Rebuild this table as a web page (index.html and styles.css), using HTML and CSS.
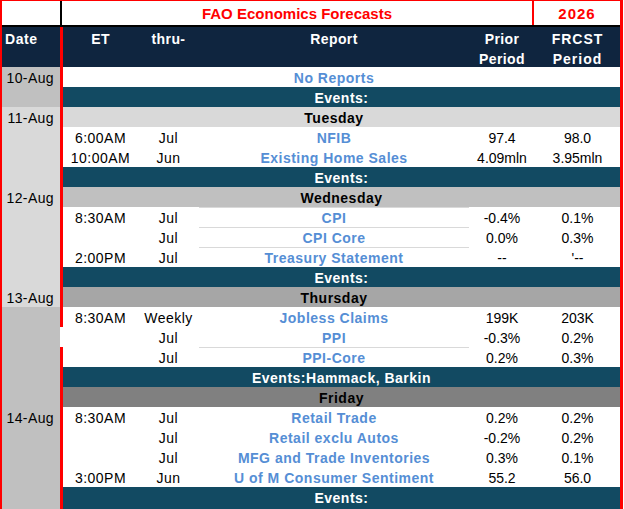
FILE: index.html
```html
<!DOCTYPE html>
<html>
<head>
<meta charset="utf-8">
<title>FAO Economics Forecasts</title>
<link rel="stylesheet" href="styles.css">
</head>
<body>
<div class="sheet">
  <div class="title-row">
    <div class="t-blank"></div>
    <div class="t-main">FAO Economics Forecasts</div>
    <div class="t-year">2026</div>
  </div>

  <div class="head">
    <div class="hd">Date</div>
    <div class="sep"></div>
    <div class="grid">
      <div class="hc">ET</div>
      <div class="hc">thru-</div>
      <div class="hc">Report</div>
      <div class="hc">Prior<br>Period</div>
      <div class="hc wide">FRCST<br>Period</div>
    </div>
  </div>

  <div class="row">
    <div class="d silver">10-Aug</div><div class="sep"></div>
    <div class="grid white"><div class="c rep mid">No Reports</div></div>
  </div>
  <div class="row">
    <div class="d silver"></div><div class="sep"></div>
    <div class="grid events"><div class="c span">Events:</div></div>
  </div>

  <div class="row">
    <div class="d light">11-Aug</div><div class="sep"></div>
    <div class="grid day-light"><div class="c day mid">Tuesday</div></div>
  </div>
  <div class="row">
    <div class="d light"></div><div class="sep"></div>
    <div class="grid white">
      <div class="c">6:00AM</div><div class="c">Jul</div><div class="c rep">NFIB</div><div class="c num">97.4</div><div class="c num">98.0</div>
    </div>
  </div>
  <div class="row">
    <div class="d light"></div><div class="sep"></div>
    <div class="grid white">
      <div class="c">10:00AM</div><div class="c">Jun</div><div class="c rep">Existing Home Sales</div><div class="c num">4.09mln</div><div class="c num">3.95mln</div>
    </div>
  </div>
  <div class="row">
    <div class="d light"></div><div class="sep"></div>
    <div class="grid events"><div class="c span">Events:</div></div>
  </div>

  <div class="row">
    <div class="d light">12-Aug</div><div class="sep"></div>
    <div class="grid day-silver"><div class="c day span">Wednesday</div></div>
  </div>
  <div class="row">
    <div class="d light"></div><div class="sep"></div>
    <div class="grid white">
      <div class="c">8:30AM</div><div class="c">Jul</div><div class="c rep rule">CPI</div><div class="c num">-0.4%</div><div class="c num">0.1%</div>
    </div>
  </div>
  <div class="row">
    <div class="d light"></div><div class="sep"></div>
    <div class="grid white">
      <div class="c"></div><div class="c">Jul</div><div class="c rep rule">CPI Core</div><div class="c num">0.0%</div><div class="c num">0.3%</div>
    </div>
  </div>
  <div class="row">
    <div class="d light"></div><div class="sep"></div>
    <div class="grid white">
      <div class="c">2:00PM</div><div class="c">Jul</div><div class="c rep rule">Treasury Statement</div><div class="c num">--</div><div class="c num">'--</div>
    </div>
  </div>
  <div class="row">
    <div class="d light"></div><div class="sep"></div>
    <div class="grid events"><div class="c span">Events:</div></div>
  </div>

  <div class="row">
    <div class="d light">13-Aug</div><div class="sep"></div>
    <div class="grid day-dark"><div class="c day mid">Thursday</div></div>
  </div>
  <div class="row">
    <div class="d silver"></div><div class="sep"></div>
    <div class="grid white">
      <div class="c">8:30AM</div><div class="c">Weekly</div><div class="c rep">Jobless Claims</div><div class="c num">199K</div><div class="c num">203K</div>
    </div>
  </div>
  <div class="row">
    <div class="d silver"></div><div class="sep gap"></div>
    <div class="grid white">
      <div class="c"></div><div class="c">Jul</div><div class="c rep">PPI</div><div class="c num">-0.3%</div><div class="c num">0.2%</div>
    </div>
  </div>
  <div class="row">
    <div class="d silver"></div><div class="sep"></div>
    <div class="grid white">
      <div class="c"></div><div class="c">Jul</div><div class="c rep rule">PPI-Core</div><div class="c num">0.2%</div><div class="c num">0.3%</div>
    </div>
  </div>
  <div class="row">
    <div class="d silver"></div><div class="sep"></div>
    <div class="grid events"><div class="c span">Events:Hammack, Barkin</div></div>
  </div>

  <div class="row">
    <div class="d silver"></div><div class="sep"></div>
    <div class="grid day-grey"><div class="c day span">Friday</div></div>
  </div>
  <div class="row">
    <div class="d silver">14-Aug</div><div class="sep"></div>
    <div class="grid white">
      <div class="c">8:30AM</div><div class="c">Jul</div><div class="c rep">Retail Trade</div><div class="c num">0.2%</div><div class="c num">0.2%</div>
    </div>
  </div>
  <div class="row">
    <div class="d silver"></div><div class="sep"></div>
    <div class="grid white">
      <div class="c"></div><div class="c">Jul</div><div class="c rep">Retail exclu Autos</div><div class="c num">-0.2%</div><div class="c num">0.2%</div>
    </div>
  </div>
  <div class="row">
    <div class="d silver"></div><div class="sep"></div>
    <div class="grid white">
      <div class="c"></div><div class="c">Jul</div><div class="c rep">MFG and Trade Inventories</div><div class="c num">0.3%</div><div class="c num">0.1%</div>
    </div>
  </div>
  <div class="row">
    <div class="d silver"></div><div class="sep"></div>
    <div class="grid white">
      <div class="c">3:00PM</div><div class="c">Jun</div><div class="c rep">U of M Consumer Sentiment</div><div class="c num">55.2</div><div class="c num">56.0</div>
    </div>
  </div>
  <div class="row last">
    <div class="d silver"></div><div class="sep"></div>
    <div class="grid events"><div class="c span">Events:</div></div>
  </div>
</div>
</body>
</html>
```

FILE: styles.css
```css
html, body {
  margin: 0;
  padding: 0;
  background: #ffffff;
}

body {
  font-family: "Liberation Sans", Arial, sans-serif;
  font-size: 14px;
  color: #000000;
}

.sheet {
  width: 623px;
  box-sizing: border-box;
  border-left: 2px solid #ff0000;
  border-right: 3px solid #ff0000;
  border-top: 1px solid #ff0000;
}

/* title row */
.title-row {
  display: flex;
  height: 26px;
  box-sizing: border-box;
  border-bottom: 2px solid #000000;
  background: #ffffff;
}

.t-blank {
  flex: none;
  width: 58px;
  border-right: 2px solid #000000;
}

.t-main,
.t-year {
  flex: none;
  box-sizing: border-box;
  height: 24px;
  padding-top: 2px;
  line-height: 22px;
  text-align: center;
  color: #ff0000;
  font-weight: bold;
  font-size: 15px;
}

.t-main {
  width: 470px;
  border-right: 2px solid #ff0000;
  width: 472px;
}

.t-year {
  width: 86px;
  letter-spacing: 1px;
}

/* header */
.head {
  display: flex;
  height: 40px;
  background: #0f253f;
  color: #ffffff;
  font-weight: bold;
}

.hd {
  flex: none;
  width: 58px;
  box-sizing: border-box;
  padding: 1.5px 0 0 3px;
  line-height: 20px;
  letter-spacing: 0.6px;
}

.hc {
  text-align: center;
  padding-top: 1.5px;
  line-height: 20px;
  letter-spacing: 0.4px;
  white-space: nowrap;
}

.hc.wide {
  letter-spacing: 1px;
}

/* generic */
.sep {
  flex: none;
  width: 3px;
  background: #ff0000;
}

.sep.gap {
  background: #ffffff;
}

.grid {
  flex: none;
  width: 557px;
  display: grid;
  grid-template-columns: 75px 61px 270px 66px 85px;
}

.row {
  display: flex;
  height: 20px;
}

.row.last {
  height: 22px;
}

.d {
  flex: none;
  width: 58px;
  box-sizing: border-box;
  padding: 2px 6px 0 0;
  line-height: 19px;
  text-align: right;
  letter-spacing: 0.4px;
  white-space: nowrap;
}

.silver { background: #c0c0c0; }
.light { background: #d9d9d9; }

.white { background: #ffffff; }
.events { background: #124a62; color: #ffffff; font-weight: bold; }
.day-light { background: #d9d9d9; }
.day-silver { background: #c0c0c0; }
.day-dark { background: #a6a6a6; }
.day-grey { background: #808080; }

.c {
  box-sizing: border-box;
  height: 20px;
  padding-top: 2px;
  line-height: 19px;
  text-align: center;
  white-space: nowrap;
  letter-spacing: 0.5px;
}

.row.last .c {
  height: 22px;
}

.c.num {
  letter-spacing: 0;
}

.c.rep {
  color: #558ed5;
  font-weight: bold;
}

.c.day {
  font-weight: bold;
  color: #000000;
}

.c.span {
  grid-column: 1 / -1;
}

.c.mid {
  grid-column: 3;
}

.c.rule {
  box-shadow: inset 0 1px 0 #d9d9d9;
}
```
